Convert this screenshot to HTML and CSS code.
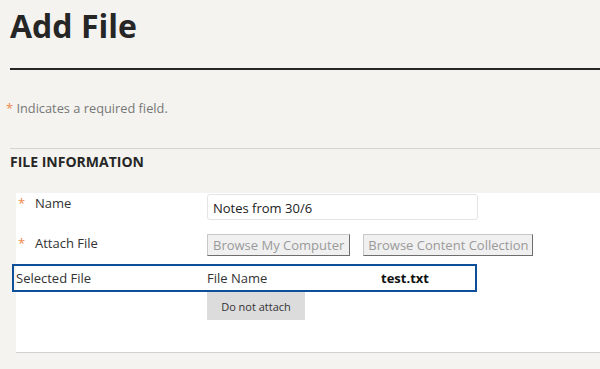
FILE: index.html
```html
<!DOCTYPE html>
<html>
<head>
<meta charset="utf-8">
<link rel="stylesheet" href="styles.css">
</head>
<body>
<div class="page">
  <div class="title-wrap">
    <h1 class="title">Add File</h1>
  </div>
  <p class="required"><span class="star">*</span> Indicates a required field.</p>
  <div class="section">
    <h2 class="section-title">FILE INFORMATION</h2>
  </div>
  <div class="panel">
    <div class="row row-name">
      <div class="label"><span class="star">*</span><span class="label-text">Name</span></div>
      <div class="field"><div class="input">Notes from 30/6</div></div>
    </div>
    <div class="row row-attach">
      <div class="label"><span class="star">*</span><span class="label-text">Attach File</span></div>
      <div class="field buttons">
        <button class="btn">Browse My Computer</button>
        <button class="btn">Browse Content Collection</button>
      </div>
    </div>
    <div class="selected">
      <div class="sel-label">Selected File</div>
      <div class="sel-name">File Name</div>
      <div class="sel-file">test.txt</div>
    </div>
    <div class="row row-detach">
      <div class="label"></div>
      <div class="field"><button class="btn-detach">Do not attach</button></div>
    </div>
  </div>
</div>
</body>
</html>
```

FILE: styles.css
```css
* { box-sizing: border-box; }
html, body {
  margin: 0;
  padding: 0;
  background: #f4f3ef;
  font-family: "Open Sans", "Noto Sans", sans-serif;
  color: #333;
}
.page {
  width: 600px;
  height: 369px;
  overflow: hidden;
}
.title-wrap {
  margin-left: 10px;
  height: 70px;
  border-bottom: 2px solid #262626;
}
.title {
  margin: 0;
  padding-top: 4px;
  font-size: 32px;
  line-height: 44px;
  font-weight: 700;
  color: #262626;
}
.required {
  margin: 29px 0 0 6px;
  font-size: 12.8px;
  line-height: 18px;
  color: #777;
}
.star {
  color: #f0874c;
}
.section {
  margin-left: 10px;
  margin-top: 31px;
  border-top: 1px solid #d6d5d2;
}
.section-title {
  margin: 0;
  padding-top: 3px;
  font-size: 14px;
  line-height: 20px;
  font-weight: 700;
  color: #262626;
}
.panel {
  margin-left: 16px;
  margin-top: 21px;
  height: 160px;
  background: #fff;
  border-bottom: 1px solid #d0d0d0;
  padding-top: 1px;
}
.row {
  display: grid;
  grid-template-columns: 191px 1fr;
}
.label {
  display: flex;
  align-items: flex-start;
  padding-left: 2px;
  font-size: 13px;
  color: #333;
}
.label .star {
  font-size: 13px;
  line-height: 14px;
  width: 17px;
  padding-top: 2px;
}
.label-text {
  line-height: 18px;
}
.input {
  width: 271px;
  height: 26px;
  border: 1px solid #e4e4e4;
  border-radius: 3px;
  padding: 0 5px;
  font-size: 13px;
  line-height: 26px;
  color: #222;
}
.row-attach {
  margin-top: 14px;
}
.buttons {
  display: flex;
  gap: 13px;
}
.btn {
  margin: 0;
  height: 22px;
  padding: 0 5px;
  background: #f0f0f0;
  border: 1px solid #c8c8c8;
  border-right-color: #6e6e6e;
  border-bottom-color: #6e6e6e;
  border-radius: 0;
  font-family: "Open Sans", "Noto Sans", sans-serif;
  font-size: 13px;
  line-height: 20px;
  color: #9a9a9a;
}
.btn + .btn {
  padding: 0 4px;
}
.selected {
  margin-left: -4px;
  margin-top: 8px;
  width: 465px;
  height: 28px;
  border: 2px solid #0d4f99;
  display: grid;
  grid-template-columns: 191px 174px 1fr;
  align-items: center;
  padding-left: 2px;
  font-size: 13px;
  color: #333;
}
.sel-label { margin-top: -1px; }
.sel-file {
  font-weight: 700;
  color: #111;
}
.btn-detach {
  margin: 0;
  width: 98px;
  height: 28px;
  background: #dcdcdc;
  border: none;
  font-family: "Open Sans", "Noto Sans", sans-serif;
  font-size: 11px;
  color: #333;
}
```
